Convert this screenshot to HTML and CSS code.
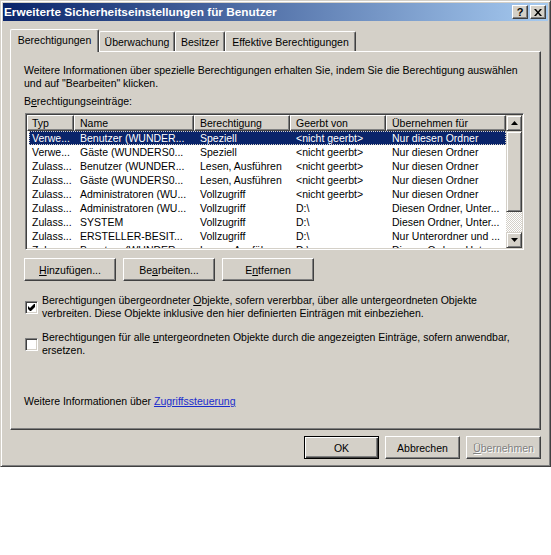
FILE: index.html
```html
<!DOCTYPE html>
<html lang="de">
<head>
<meta charset="utf-8">
<title>Erweiterte Sicherheitseinstellungen für Benutzer</title>
<link rel="stylesheet" href="styles.css">
</head>
<body>
<div class="window">
  <div class="titlebar">
    <span class="title">Erweiterte Sicherheitseinstellungen für Benutzer</span>
    <div class="capbtns">
      <span class="capbtn help">?</span>
      <span class="capbtn close"><svg width="8" height="7" viewBox="0 0 8 7"><path d="M0,0 h2 l2,2.5 l2,-2.5 h2 l-3,3.5 l3,3.5 h-2 l-2,-2.5 l-2,2.5 h-2 l3,-3.5 z" fill="#000"/></svg></span>
    </div>
  </div>
  <div class="dlg">
    <div class="tabs">
      <div class="tab active tab-perm">Berechtigungen</div>
      <div class="tab tab-audit">Überwachung</div>
      <div class="tab tab-owner">Besitzer</div>
      <div class="tab tab-eff">Effektive Berechtigungen</div>
    </div>
    <div class="panel">
      <p class="info">Weitere Informationen über spezielle Berechtigungen erhalten Sie, indem Sie die Berechtigung auswählen<br>und auf &quot;Bearbeiten&quot; klicken.</p>
      <div class="label">B<u>e</u>rechtigungseinträge:</div>
      <div class="list">
        <div class="lv">
          <div class="lv-head">
            <div class="hc c1">Typ</div>
            <div class="hc c2">Name</div>
            <div class="hc c3">Berechtigung</div>
            <div class="hc c4">Geerbt von</div>
            <div class="hc c5">Übernehmen für</div>
          </div>
          <div class="row sel">
            <div class="cell c1">Verwe...</div><div class="cell c2">Benutzer (WUNDER...</div><div class="cell c3">Speziell</div><div class="cell c4">&lt;nicht geerbt&gt;</div><div class="cell c5">Nur diesen Ordner</div>
          </div>
          <div class="row">
            <div class="cell c1">Verwe...</div><div class="cell c2">Gäste (WUNDERS0...</div><div class="cell c3">Speziell</div><div class="cell c4">&lt;nicht geerbt&gt;</div><div class="cell c5">Nur diesen Ordner</div>
          </div>
          <div class="row">
            <div class="cell c1">Zulass...</div><div class="cell c2">Benutzer (WUNDER...</div><div class="cell c3">Lesen, Ausführen</div><div class="cell c4">&lt;nicht geerbt&gt;</div><div class="cell c5">Nur diesen Ordner</div>
          </div>
          <div class="row">
            <div class="cell c1">Zulass...</div><div class="cell c2">Gäste (WUNDERS0...</div><div class="cell c3">Lesen, Ausführen</div><div class="cell c4">&lt;nicht geerbt&gt;</div><div class="cell c5">Nur diesen Ordner</div>
          </div>
          <div class="row">
            <div class="cell c1">Zulass...</div><div class="cell c2">Administratoren (WU...</div><div class="cell c3">Vollzugriff</div><div class="cell c4">&lt;nicht geerbt&gt;</div><div class="cell c5">Nur diesen Ordner</div>
          </div>
          <div class="row">
            <div class="cell c1">Zulass...</div><div class="cell c2">Administratoren (WU...</div><div class="cell c3">Vollzugriff</div><div class="cell c4">D:\</div><div class="cell c5">Diesen Ordner, Unter...</div>
          </div>
          <div class="row">
            <div class="cell c1">Zulass...</div><div class="cell c2">SYSTEM</div><div class="cell c3">Vollzugriff</div><div class="cell c4">D:\</div><div class="cell c5">Diesen Ordner, Unter...</div>
          </div>
          <div class="row">
            <div class="cell c1">Zulass...</div><div class="cell c2">ERSTELLER-BESIT...</div><div class="cell c3">Vollzugriff</div><div class="cell c4">D:\</div><div class="cell c5">Nur Unterordner und ...</div>
          </div>
          <div class="row">
            <div class="cell c1">Zulass...</div><div class="cell c2">Benutzer (WUNDER...</div><div class="cell c3">Lesen, Ausführen</div><div class="cell c4">D:\</div><div class="cell c5">Diesen Ordner, Unter...</div>
          </div>
        </div>
        <div class="sb">
          <div class="sb-btn"><svg width="7" height="4" viewBox="0 0 7 4"><polygon points="3.5,0 7,4 0,4" fill="#000"/></svg></div>
          <div class="sb-thumb"></div>
          <div class="sb-track"></div>
          <div class="sb-btn"><svg width="7" height="4" viewBox="0 0 7 4"><polygon points="0,0 7,0 3.5,4" fill="#000"/></svg></div>
        </div>
      </div>
      <div class="btnrow">
        <div class="btn"><u>H</u>inzufügen...</div>
        <div class="btn">Be<u>a</u>rbeiten...</div>
        <div class="btn">E<u>n</u>tfernen</div>
      </div>
      <div class="chk-row first">
        <span class="box"><svg width="7" height="7" viewBox="0 0 7 7"><polygon points="0,2 2,4 6,0 7,0 7,3 3,7 2,7 0,5" fill="#000"/></svg></span>
        <span class="chk-text">Berechtigungen übergeordneter <u>O</u>bjekte, sofern vererbbar, über alle untergeordneten Objekte<br>verbreiten. Diese Objekte inklusive den hier definierten Einträgen mit einbeziehen.</span>
      </div>
      <div class="chk-row">
        <span class="box"></span>
        <span class="chk-text">Berechtigungen für alle <u>u</u>ntergeordneten Objekte durch die angezeigten Einträge, sofern anwendbar,<br>ersetzen.</span>
      </div>
      <div class="more">Weitere Informationen über <a class="link" href="#">Zugriffssteuerung</a></div>
    </div>
    <div class="footer">
      <div class="btn wide default">OK</div>
      <div class="btn wide">Abbrechen</div>
      <div class="btn wide disabled"><u>Ü</u>bernehmen</div>
    </div>
  </div>
</div>
</body>
</html>
```

FILE: styles.css
```css
* { box-sizing: border-box; }
body {
  margin: 0;
  background: #fff;
  font-family: "Liberation Sans", Arial, sans-serif;
  font-size: 10.5px;
  color: #000;
}
.window {
  width: 551px;
  height: 467px;
  background: #d4d0c8;
  border: 1px solid;
  border-color: #d4d0c8 #404040 #404040 #d4d0c8;
  box-shadow: inset 1px 1px #fff, inset -1px -1px #808080;
  padding: 2px;
  display: flex;
  flex-direction: column;
}
.titlebar {
  height: 18px;
  flex: none;
  display: flex;
  align-items: center;
  justify-content: space-between;
  background: linear-gradient(to right, #0a246a, #a6caf0);
  padding: 0 2px 0 1px;
}
.title {
  color: #fff;
  font-weight: bold;
  font-size: 11.8px;
  white-space: nowrap;
}
.capbtns { display: flex; gap: 2px; }
.capbtn {
  width: 16px;
  height: 14px;
  background: #d4d0c8;
  border: 1px solid;
  border-color: #fff #404040 #404040 #fff;
  box-shadow: inset -1px -1px #808080;
  display: flex;
  align-items: center;
  justify-content: center;
}
.help { font-weight: bold; font-size: 11px; line-height: 1; padding-top: 1px; }
.dlg {
  flex: 1;
  display: flex;
  flex-direction: column;
  padding: 8px 7px 0 7px;
}
.tabs {
  display: flex;
  align-items: flex-end;
  height: 22px;
}
.tab {
  height: 20px;
  display: flex;
  align-items: center;
  justify-content: center;
  background: #d4d0c8;
  border-top: 1px solid #fff;
  border-left: 1px solid #fff;
  border-right: 1px solid #404040;
  box-shadow: inset -1px 0 #808080;
  border-radius: 2px 2px 0 0;
  white-space: nowrap;
}
.tab.active {
  height: 23px;
  margin-bottom: -1px;
  position: relative;
  z-index: 1;
  padding-bottom: 2px;
}
.tab-perm { width: 89px; }
.tab-audit { width: 76px; }
.tab-owner { width: 50px; }
.tab-eff { width: 131px; }
.panel {
  width: 531px;
  height: 379px;
  border: 1px solid;
  border-color: #fff #404040 #404040 #fff;
  box-shadow: inset -1px -1px #808080;
  padding: 12px 0 0 13px;
}
.info { margin: 0; line-height: 13px; }
.label { margin-top: 5px; line-height: 13px; }
.list {
  margin: 5px 0 0 1px;
  width: 499px;
  height: 137px;
  border: 1px solid;
  border-color: #808080 #fff #fff #808080;
  box-shadow: inset 1px 1px #404040, inset -1px -1px #d4d0c8;
  padding: 1px;
  display: flex;
  background: #fff;
}
.lv { flex: 1; overflow: hidden; }
.lv-head { display: flex; height: 16px; }
.hc {
  background: #d4d0c8;
  border: 1px solid;
  border-color: #fff #404040 #404040 #fff;
  box-shadow: inset -1px -1px #808080;
  padding-left: 5px;
  line-height: 14px;
  white-space: nowrap;
  overflow: hidden;
}
.hc.c1 { padding-left: 4px; }
.c1 { width: 47px; flex: none; }
.c2 { width: 120px; flex: none; }
.c3 { width: 96px; flex: none; }
.c4 { width: 96px; flex: none; }
.c5 { width: 120px; flex: none; }
.row {
  display: flex;
  height: 14px;
  line-height: 14px;
  margin-left: 2px;
}
.cell {
  padding-left: 6px;
  white-space: nowrap;
  overflow: hidden;
}
.cell.c1 { width: 45px; padding-left: 3px; }
.row.sel {
  background: #0a246a;
  color: #fff;
  outline: 1px dotted #d4d0c8;
  outline-offset: -1px;
}
.sb {
  width: 16px;
  flex: none;
  display: flex;
  flex-direction: column;
}
.sb-btn, .sb-thumb {
  background: #d4d0c8;
  border: 1px solid;
  border-color: #d4d0c8 #404040 #404040 #d4d0c8;
  box-shadow: inset 1px 1px #fff, inset -1px -1px #808080;
}
.sb-btn {
  height: 16px;
  flex: none;
  display: flex;
  align-items: center;
  justify-content: center;
}
.sb-thumb { height: 81px; flex: none; }
.sb-track {
  flex: 1;
  background: repeating-conic-gradient(#fff 0 25%, #d4d0c8 0 50%) 0 0 / 2px 2px;
}
.btnrow { display: flex; gap: 7px; margin-top: 8px; }
.btn {
  width: 92px;
  height: 23px;
  background: #d4d0c8;
  border: 1px solid;
  border-color: #fff #404040 #404040 #fff;
  box-shadow: inset -1px -1px #808080;
  display: flex;
  align-items: center;
  justify-content: center;
  white-space: nowrap;
}
.btn.wide { width: 75px; }
.btn.default {
  border-color: #000;
  box-shadow: inset 1px 1px #fff, inset -1px -1px #404040, inset -2px -2px #808080;
}
.btn.disabled { color: #808080; text-shadow: 1px 1px #fff; }
.chk-row {
  display: flex;
  align-items: center;
  gap: 4px;
  margin-top: 11px;
}
.chk-row.first { margin-top: 13px; }
.box {
  width: 13px;
  height: 13px;
  flex: none;
  margin-left: 1px;
  background: #fff;
  border: 1px solid;
  border-color: #808080 #fff #fff #808080;
  box-shadow: inset 1px 1px #404040, inset -1px -1px #d4d0c8;
  display: flex;
  align-items: center;
  justify-content: center;
}
.chk-text { line-height: 13px; white-space: nowrap; }
.more { margin-top: 38px; line-height: 13px; }
.link { color: #1a2ccc; text-decoration: underline; }
.footer {
  display: flex;
  justify-content: flex-end;
  gap: 6px;
  margin-top: 6px;
}
```
